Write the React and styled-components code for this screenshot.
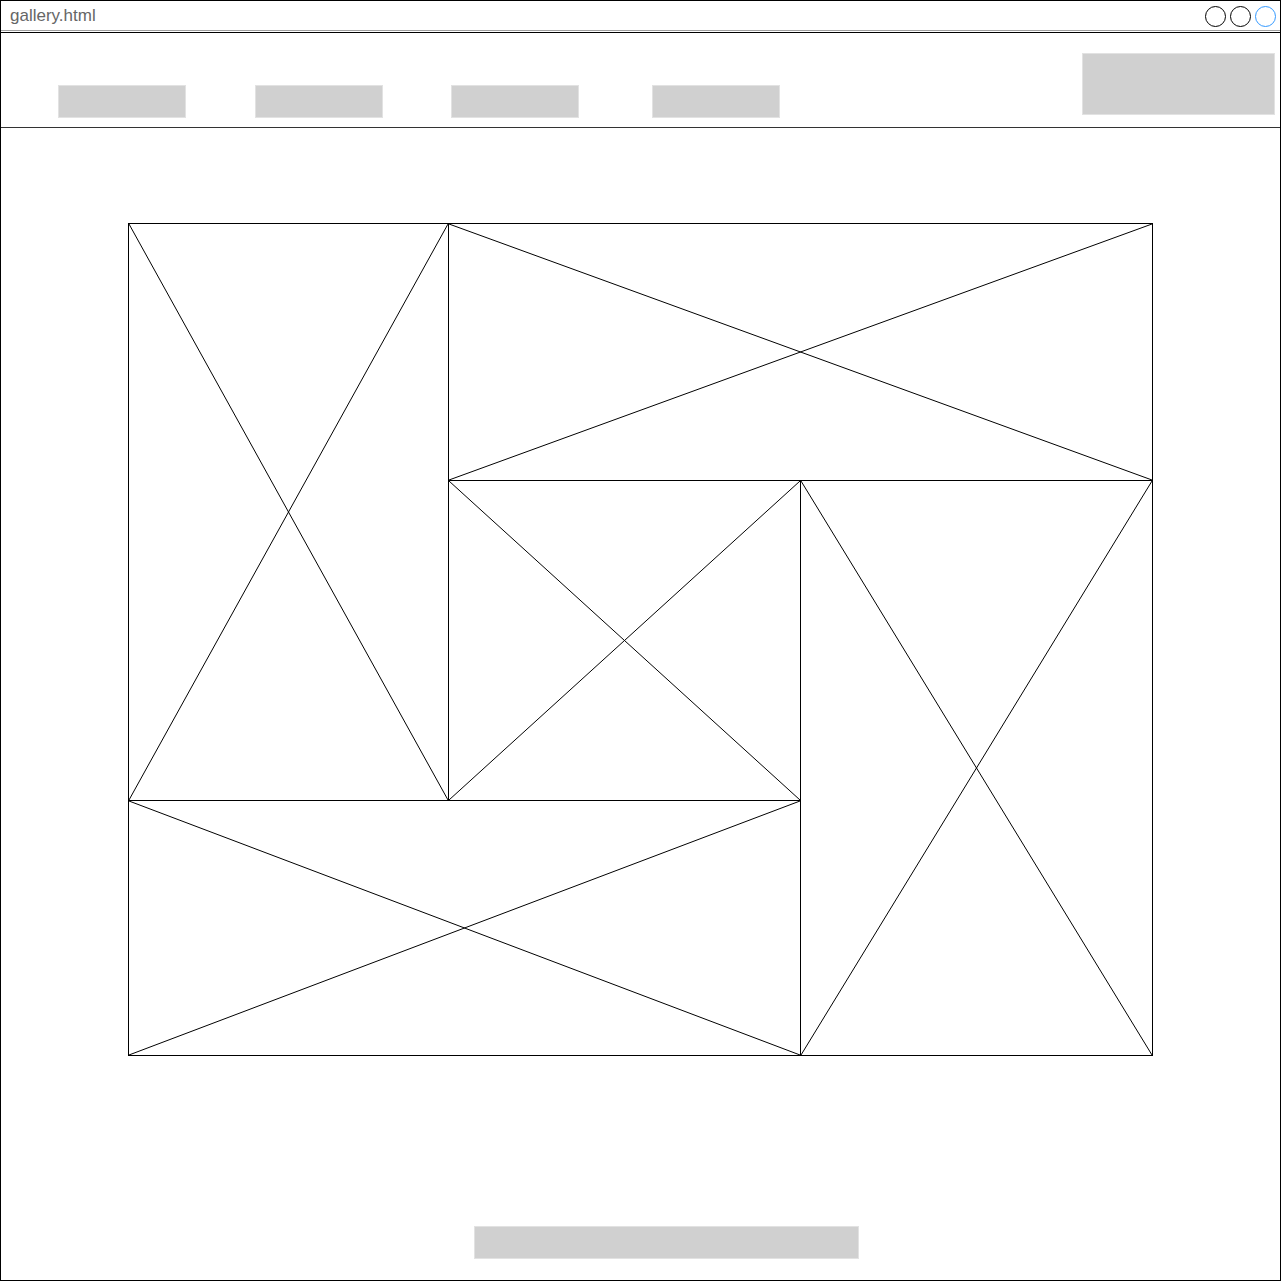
import React from 'react';
import styled, { createGlobalStyle } from 'styled-components';

const GlobalStyle = createGlobalStyle`
  html, body {
    margin: 0;
    padding: 0;
    background: #fff;
    font-family: "Liberation Sans", Arial, sans-serif;
  }
  * {
    box-sizing: border-box;
  }
`;

const tiles = [
  { id: 'a', col: '1 / 2', row: '1 / 3' },
  { id: 'b', col: '2 / 4', row: '1 / 2' },
  { id: 'c', col: '2 / 3', row: '2 / 3' },
  { id: 'd', col: '3 / 4', row: '2 / 4' },
  { id: 'e', col: '1 / 3', row: '3 / 4' }
];

const navItems = [
  { id: 'home', gap: 0 },
  { id: 'gallery', gap: 69 },
  { id: 'about', gap: 68 },
  { id: 'contact', gap: 73 }
];

const Placeholder = () => (
  <svg width='100%' height='100%' viewBox='0 0 100 100' preserveAspectRatio='none'>
    <line x1='0' y1='0' x2='100' y2='100' stroke='#000' strokeWidth='1' vectorEffect='non-scaling-stroke' />
    <line x1='100' y1='0' x2='0' y2='100' stroke='#000' strokeWidth='1' vectorEffect='non-scaling-stroke' />
  </svg>
);

const App = () => {
  return(
    <>
      <GlobalStyle />
      <Window>
        <TitleBar>
          <Title>gallery.html</Title>
          <Controls>
            <Dot />
            <Dot />
            <Dot $active />
          </Controls>
        </TitleBar>
        <Header>
          <Nav>
            { navItems.map(n => (
              <NavItem key={ n.id } $gap={ n.gap } />
            )) }
          </Nav>
          <Action />
        </Header>
        <Main>
          <Gallery>
            { tiles.map(t => (
              <Tile key={ t.id } $col={ t.col } $row={ t.row }>
                <Placeholder />
              </Tile>
            )) }
          </Gallery>
        </Main>
        <Footer>
          <FooterBar />
        </Footer>
      </Window>
    </>
  );
};

const Window = styled.div`
  width: 1281px;
  height: 1281px;
  border: 1px solid #000;
  display: flex;
  flex-direction: column;
`;

const TitleBar = styled.div`
  height: 30px;
  border-bottom: 1px solid #a0a0a0;
  display: flex;
  align-items: center;
  justify-content: space-between;
  padding: 0 4px 0 9px;
`;

const Title = styled.span`
  font-size: 17px;
  color: #666;
  padding-top: 1px;
`;

const Controls = styled.div`
  display: flex;
  gap: 4px;
  padding-top: 1px;
`;

const Dot = styled.span`
  width: 21px;
  height: 21px;
  border-radius: 50%;
  border: 1px solid ${ p => p.$active ? '#3399ff' : '#000' };
`;

const Header = styled.header`
  margin-top: 1px;
  height: 96px;
  border-top: 1px solid #000;
  border-bottom: 1px solid #333;
  display: flex;
  justify-content: space-between;
  padding: 20px 5px 0 57px;
`;

const Nav = styled.nav`
  display: flex;
  align-items: flex-start;
  padding-top: 32px;
`;

const NavItem = styled.div`
  width: 128px;
  height: 33px;
  margin-left: ${ p => p.$gap }px;
  background: #d0d0d0;
  border: 1px solid #e2e2e2;
`;

const Action = styled.div`
  width: 193px;
  height: 62px;
  background: #d0d0d0;
  border: 1px solid #e2e2e2;
`;

const Main = styled.main`
  flex: 1;
  padding: 95px 0 0 127px;
`;

const Gallery = styled.div`
  display: grid;
  width: 1024px;
  grid-template-columns: 320px 352px 352px;
  grid-template-rows: 257px 320px 255px;
`;

const Tile = styled.div`
  grid-column: ${ p => p.$col };
  grid-row: ${ p => p.$row };
  border: 1px solid #000;
  margin: 0 -1px -1px 0;
  display: flex;

  svg {
    display: block;
  }
`;

const Footer = styled.footer`
  display: flex;
  justify-content: center;
  padding: 0 0 21px 0;
`;

const FooterBar = styled.div`
  width: 385px;
  height: 33px;
  margin-left: 52px;
  background: #d0d0d0;
  border: 1px solid #e2e2e2;
`;

export default App;
